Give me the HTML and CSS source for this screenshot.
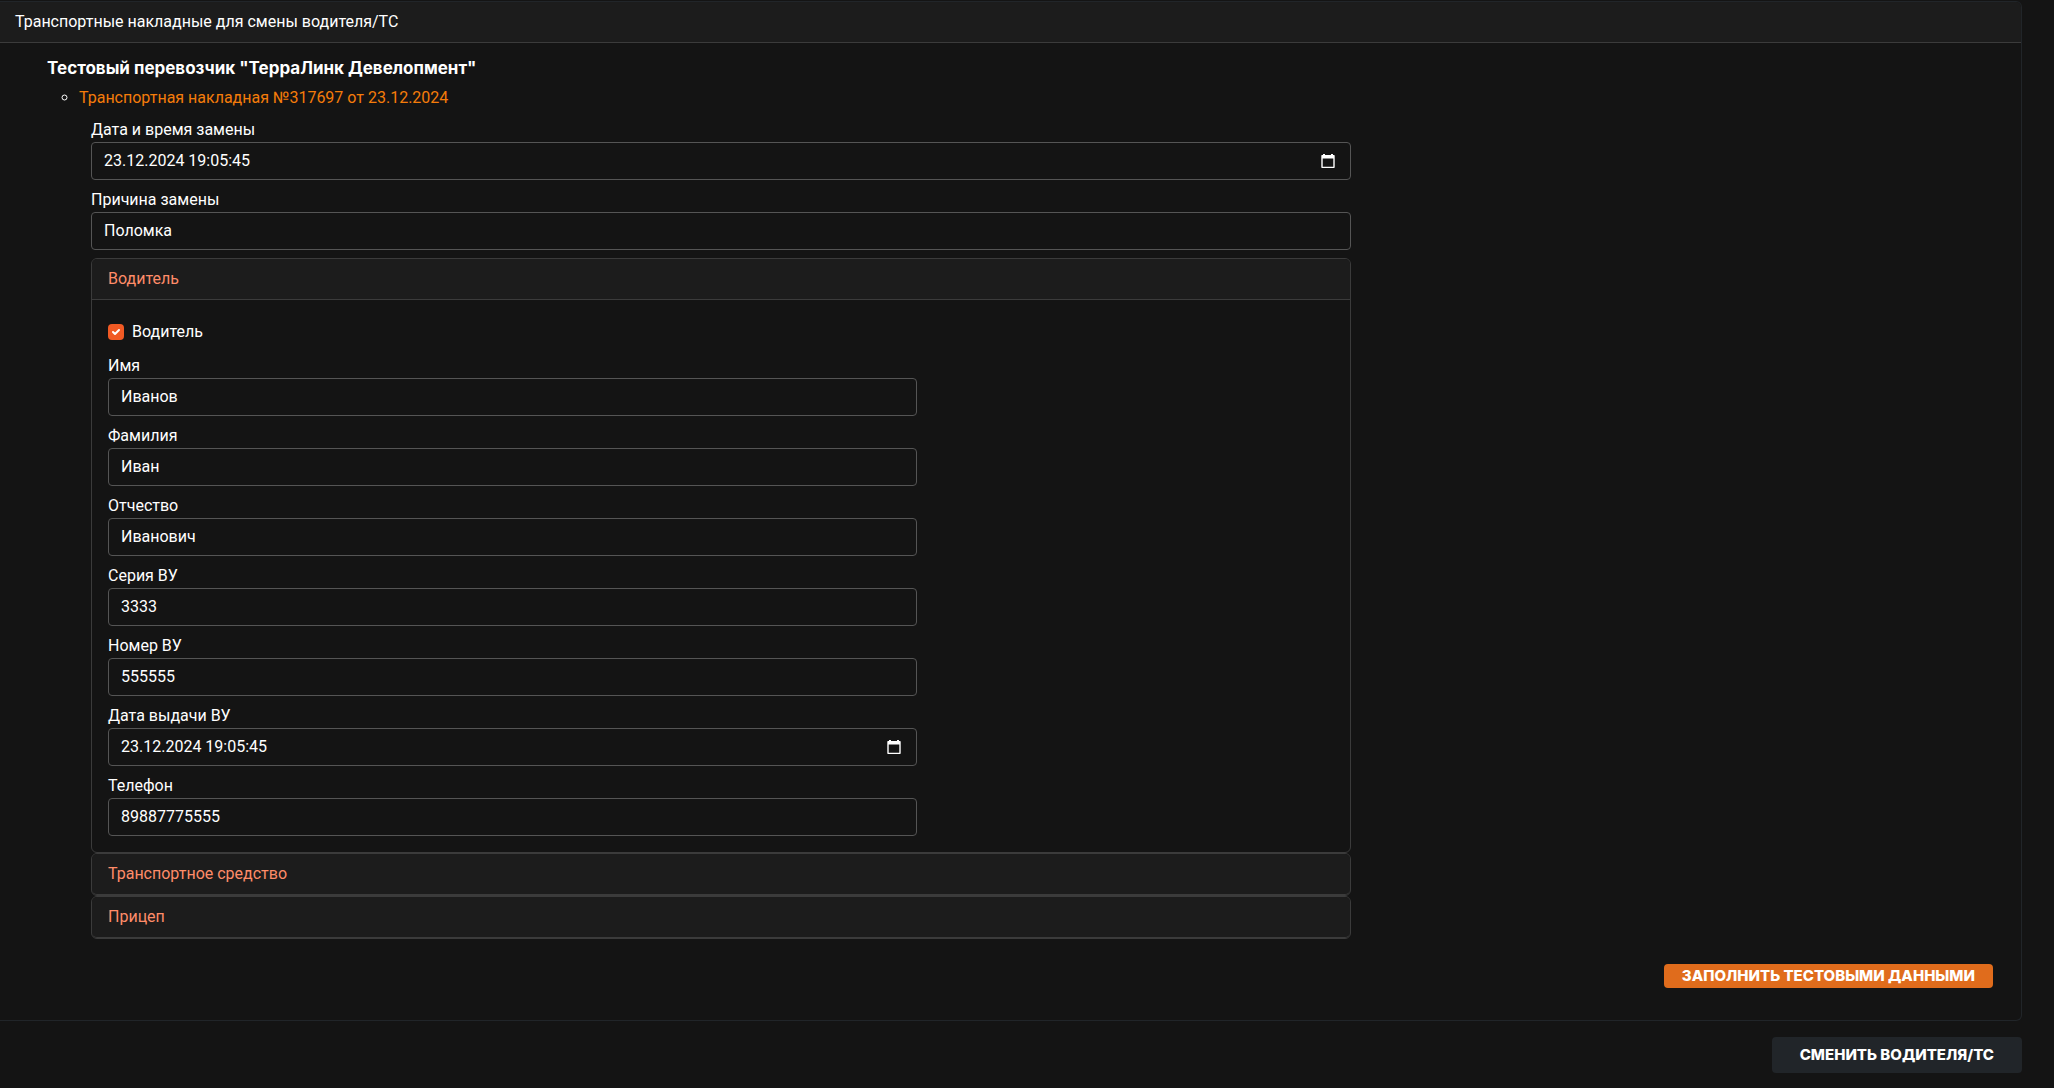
FILE: index.html
```html
<!DOCTYPE html>
<html lang="ru">
<head>
<meta charset="utf-8">
<meta name="viewport" content="width=device-width, initial-scale=1">
<title>Смена водителя/ТС</title>
<link rel="stylesheet" href="styles.css">
</head>
<body>
<main class="page">
  <section class="card">
    <header class="card-header">Транспортные накладные для смены водителя/ТС</header>
    <div class="card-body">
      <h1 class="carrier">Тестовый перевозчик "ТерраЛинк Девелопмент"</h1>
      <ul class="waybills">
        <li><a href="#waybill">Транспортная накладная №317697 от 23.12.2024</a></li>
      </ul>
      <form class="waybill" id="waybill">
        <div class="field">
          <label for="replaced-at">Дата и время замены</label>
          <div class="date-control">
            <input class="control" id="replaced-at" type="text" value="23.12.2024 19:05:45">
            <button class="picker" type="button" aria-label="Выбрать дату замены">
              <svg viewBox="0 0 14 14" width="14" height="14"><path fill="#fff" fill-rule="evenodd" d="M2 0h2v1h6V0h2v1h1a.7.7 0 0 1 .7.7v11.6a.7.7 0 0 1-.7.7H1a.7.7 0 0 1-.7-.7V1.7A.7.7 0 0 1 1 1h1zM1.700 4.500v8.200h10.600V4.500z"/></svg>
            </button>
          </div>
        </div>
        <div class="field">
          <label for="reason">Причина замены</label>
          <input class="control" id="reason" type="text" value="Поломка">
        </div>

        <section class="panel">
          <h2 class="panel-header"><a href="#driver">Водитель</a></h2>
          <div class="panel-body" id="driver">
            <div class="check">
              <input id="has-driver" type="checkbox" checked>
              <label for="has-driver">Водитель</label>
            </div>
            <div class="field">
              <label for="first-name">Имя</label>
              <input class="control" id="first-name" type="text" value="Иванов">
            </div>
            <div class="field">
              <label for="last-name">Фамилия</label>
              <input class="control" id="last-name" type="text" value="Иван">
            </div>
            <div class="field">
              <label for="patronymic">Отчество</label>
              <input class="control" id="patronymic" type="text" value="Иванович">
            </div>
            <div class="field">
              <label for="license-series">Серия ВУ</label>
              <input class="control" id="license-series" type="text" value="3333">
            </div>
            <div class="field">
              <label for="license-number">Номер ВУ</label>
              <input class="control" id="license-number" type="text" value="555555">
            </div>
            <div class="field">
              <label for="license-date">Дата выдачи ВУ</label>
              <div class="date-control">
                <input class="control" id="license-date" type="text" value="23.12.2024 19:05:45">
                <button class="picker" type="button" aria-label="Выбрать дату выдачи">
                  <svg viewBox="0 0 14 14" width="14" height="14"><path fill="#fff" fill-rule="evenodd" d="M2 0h2v1h6V0h2v1h1a.7.7 0 0 1 .7.7v11.6a.7.7 0 0 1-.7.7H1a.7.7 0 0 1-.7-.7V1.7A.7.7 0 0 1 1 1h1zM1.700 4.500v8.200h10.600V4.500z"/></svg>
                </button>
              </div>
            </div>
            <div class="field">
              <label for="phone">Телефон</label>
              <input class="control" id="phone" type="tel" value="89887775555">
            </div>
          </div>
        </section>
        <section class="panel">
          <h2 class="panel-header"><a href="#vehicle">Транспортное средство</a></h2>
        </section>
        <section class="panel">
          <h2 class="panel-header"><a href="#trailer">Прицеп</a></h2>
        </section>
      </form>
      <div class="card-actions">
        <button class="btn btn-fill" type="button">ЗАПОЛНИТЬ ТЕСТОВЫМИ ДАННЫМИ</button>
      </div>
    </div>
  </section>
  <div class="page-actions">
    <button class="btn btn-dark" type="button">СМЕНИТЬ ВОДИТЕЛЯ/ТС</button>
  </div>
</main>
</body>
</html>
```
FILE: styles.css
```css
*,
*::before,
*::after {
  box-sizing: border-box;
}

body {
  margin: 0;
  background: #141414;
  color: #fff;
  font: 16px/24px Roboto, sans-serif;
}

a {
  text-decoration: none;
}

.page {
  padding: 1px 32px 14px 0;
}

.card {
  border: 1px solid #212529;
  border-left: 0;
  border-radius: 0 6px 6px 0;
}

.card-header {
  padding: 8px 15px;
  background: #1c1c1c;
  border-bottom: 1px solid #3b3b3b;
  border-radius: 0 5px 0 0;
}

.card-body {
  padding: 13px 28px 32px 47px;
}

.carrier {
  margin: 0;
  font: 700 17px/24px Inter, sans-serif;
}

.waybills {
  margin: 6px 0 8px;
  padding-left: 32px;
  list-style: circle;
}

.waybills a {
  color: #f57c0a;
}

.waybills li::marker {
  color: #fff;
}

.waybill {
  width: calc(66% - 24px);
  margin-left: 44px;
}

.field {
  margin-bottom: 8px;
}

.field label {
  display: block;
}

.control {
  display: block;
  width: 100%;
  height: 38px;
  padding: 5px 12px 7px;
  border: 1px solid #555;
  border-radius: 4px;
  background: #141414;
  color: #fff;
  font: inherit;
}

.date-control {
  position: relative;
}

.picker {
  position: absolute;
  top: 0;
  right: 16px;
  bottom: 0;
  display: flex;
  align-items: center;
  padding: 0;
  border: 0;
  background: none;
}

.panel {
  border: 1px solid #3b3b3b;
  border-radius: 6px;
}

.panel-header {
  margin: 0;
  padding: 8px 16px;
  background: #1c1c1c;
  border-bottom: 1px solid #3b3b3b;
  border-radius: 5px 5px 0 0;
  font: inherit;
}

.panel-header:last-child {
  border-radius: 5px;
}

.panel-header a {
  color: #ff8c69;
}

.panel-body {
  width: calc((100% - 32px) * 0.66);
  padding: 20px 0 16px 16px;
  box-sizing: content-box;
}

.panel-body .field:last-child {
  margin-bottom: 0;
}

.check {
  display: flex;
  align-items: center;
  gap: 8px;
  margin-bottom: 10px;
}

.check input {
  width: 16px;
  height: 16px;
  margin: 0;
  appearance: none;
  border-radius: 4px;
  background: #f15a24 url("data:image/svg+xml,%3Csvg xmlns='http://www.w3.org/2000/svg' viewBox='0 0 16 16'%3E%3Cpath d='M5 8l2 2 4-4' fill='none' stroke='%23fff' stroke-width='2' stroke-linecap='round' stroke-linejoin='round'/%3E%3C/svg%3E") center / contain no-repeat;
}

.card-actions,
.page-actions {
  display: flex;
  justify-content: flex-end;
}

.card-actions {
  margin-top: 25px;
}

.page-actions {
  margin-top: 16px;
}

.btn {
  border: 0;
  border-radius: 4px;
  color: #fff;
  font: 800 15px/24px Inter, sans-serif;
}

.btn-fill {
  padding: 0 18px;
  background: #e06c1c;
}

.btn-dark {
  padding: 6px 28px;
  background: #212529;
}
```
